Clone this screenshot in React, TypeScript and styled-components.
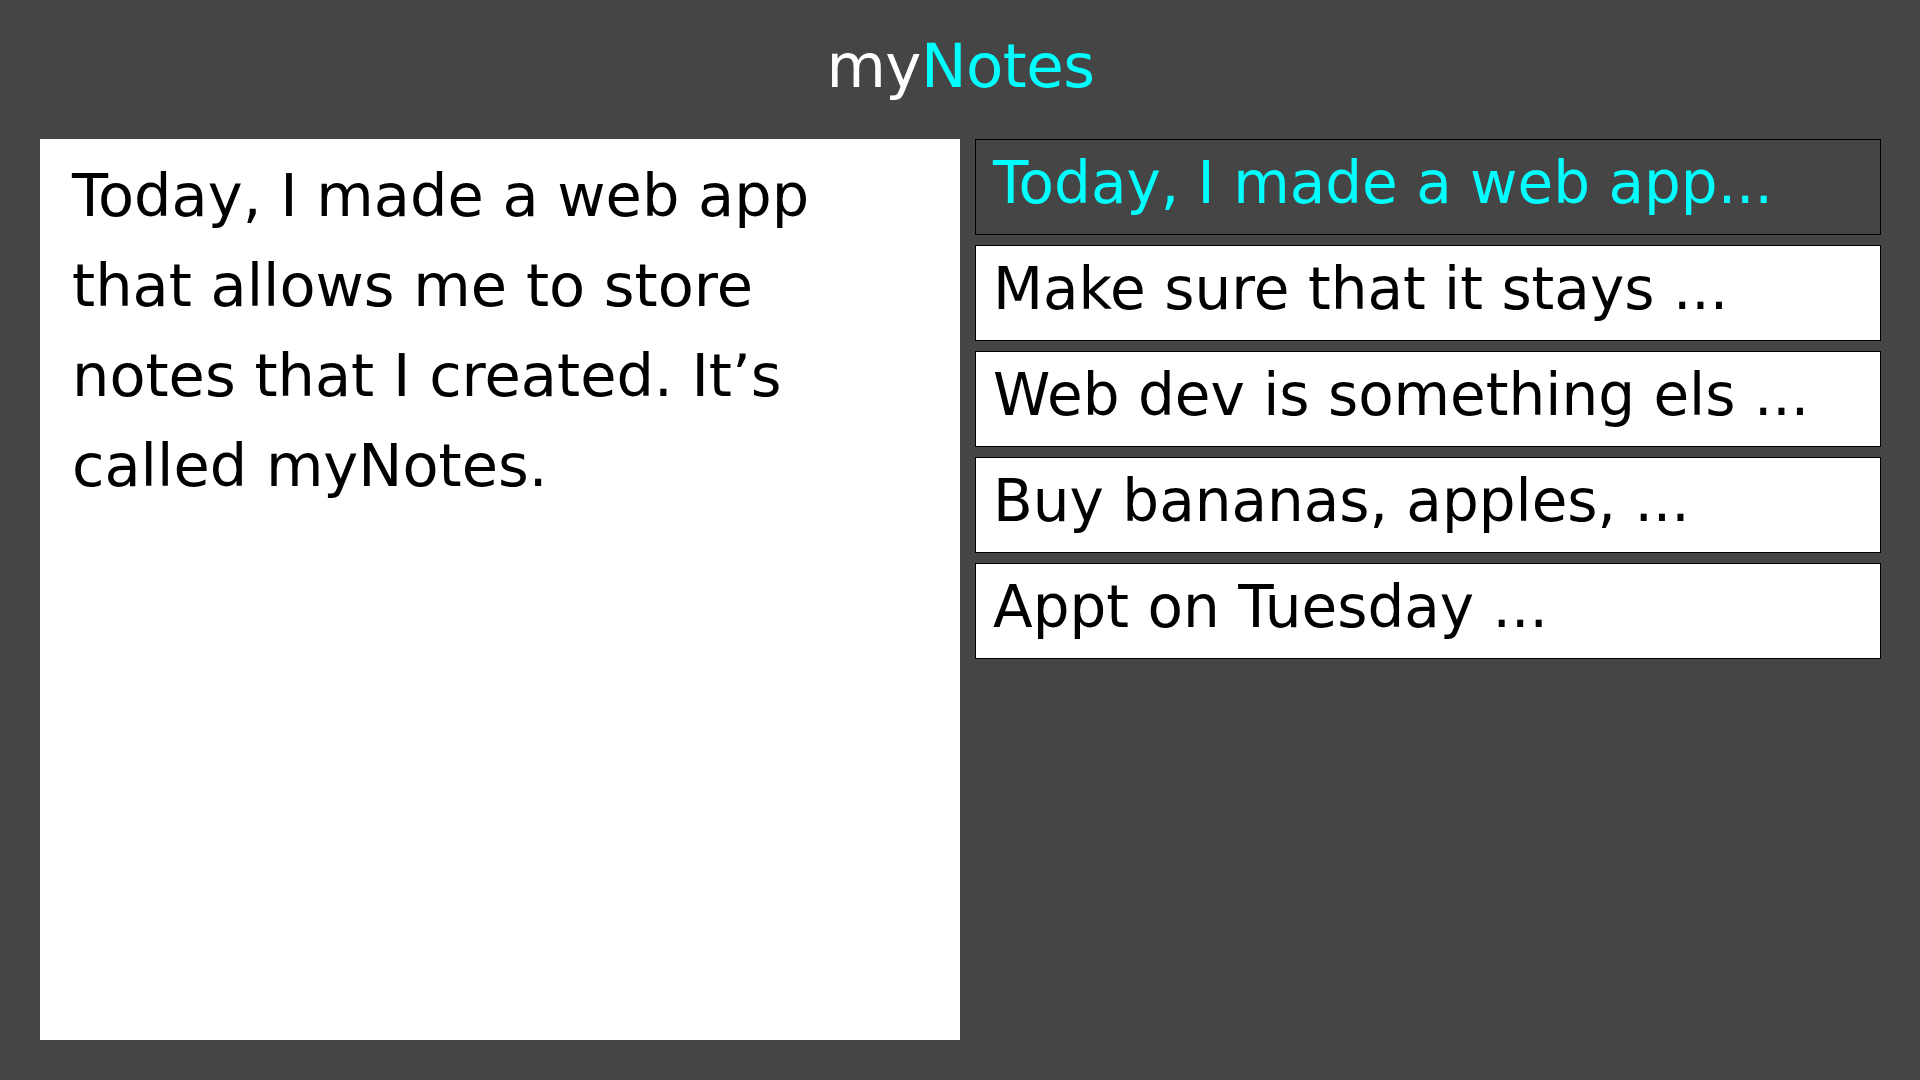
import styled, { createGlobalStyle } from "styled-components";

const GlobalStyle = createGlobalStyle`
  html, body {
    margin: 0;
    padding: 0;
    background: #454545;
  }
  body {
    font-family: "DejaVu Sans", "Open Sans", sans-serif;
  }
`;

const Page = styled.div`
  width: 1920px;
  height: 1080px;
  box-sizing: border-box;
  padding: 0 39px 40px 40px;
  display: flex;
  flex-direction: column;
  background: #454545;
`;

const Header = styled.header`
  height: 139px;
  display: flex;
  justify-content: center;
  align-items: flex-start;
`;

const Title = styled.h1`
  margin: 0;
  padding-top: 32px;
  font-size: 61px;
  font-weight: 400;
  line-height: 1.1;
  color: #ffffff;
  letter-spacing: -0.5px;
`;

const Accent = styled.span`
  color: #00ffff;
`;

const Main = styled.main`
  flex: 1;
  display: flex;
  gap: 15px;
`;

const Editor = styled.div`
  width: 920px;
  box-sizing: border-box;
  background: #ffffff;
  padding: 12px 32px;
  font-size: 59px;
  line-height: 90px;
  color: #000000;
  white-space: nowrap;
`;

const NoteList = styled.ul`
  flex: 1;
  margin: 0;
  padding: 0;
  list-style: none;
  display: flex;
  flex-direction: column;
  gap: 10px;
`;

const NoteItem = styled.li<{ $active?: boolean }>`
  height: 96px;
  box-sizing: border-box;
  border: 1px solid #000000;
  background: ${(p) => (p.$active ? "#454545" : "#ffffff")};
  color: ${(p) => (p.$active ? "#00ffff" : "#000000")};
  padding: 0 17px;
  font-size: 58px;
  line-height: 86px;
  white-space: nowrap;
  overflow: hidden;
`;

const notes = [
  "Today, I made a web app...",
  "Make sure that it stays ...",
  "Web dev is something els ...",
  "Buy bananas, apples, ...",
  "Appt on Tuesday ...",
];

export default function App() {
  return (
    <>
      <GlobalStyle />
      <Page>
        <Header>
          <Title>
            my<Accent>Notes</Accent>
          </Title>
        </Header>
        <Main>
          <Editor>
            Today, I made a web app
            <br />
            that allows me to store
            <br />
            notes that I created. It’s
            <br />
            called myNotes.
          </Editor>
          <NoteList>
            {notes.map((n, i) => (
              <NoteItem key={i} $active={i === 0}>
                {n}
              </NoteItem>
            ))}
          </NoteList>
        </Main>
      </Page>
    </>
  );
}
